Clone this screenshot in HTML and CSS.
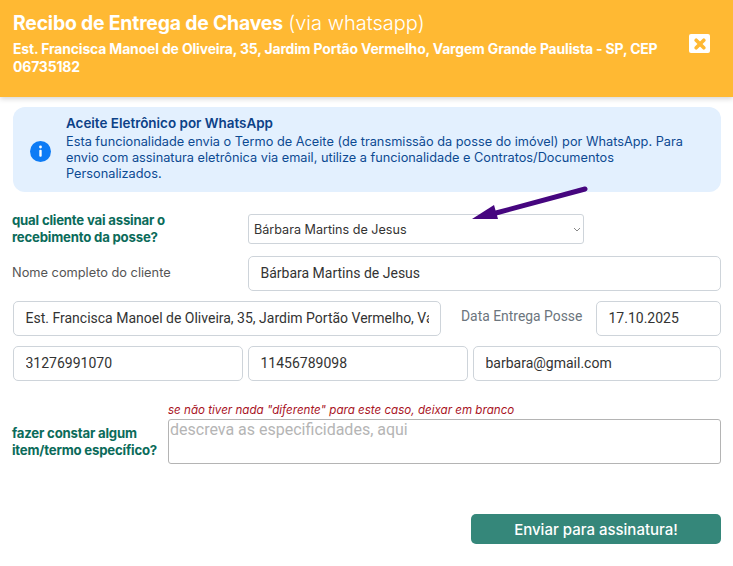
FILE: index.html
```html
<!DOCTYPE html>
<html lang="pt-BR">
<head>
<meta charset="utf-8">
<title>Recibo de Entrega de Chaves</title>
<link rel="stylesheet" href="styles.css">
</head>
<body>
<header class="head">
  <div class="head-text">
    <h1 class="title"><b>Recibo de Entrega de Chaves</b> <span class="title-light">(via whatsapp)</span></h1>
    <p class="address">Est. Francisca Manoel de Oliveira, 35, Jardim Portão Vermelho, Vargem Grande Paulista - SP, CEP 06735182</p>
  </div>
  <button class="close" aria-label="Fechar">
    <svg width="12" height="12" viewBox="0 0 12 12"><path d="M2.2 2.2 9.8 9.8M9.8 2.2 2.2 9.8" stroke="#ffb933" stroke-width="3.6" stroke-linecap="round"/></svg>
  </button>
</header>
<main class="content">
  <section class="alert">
    <svg class="alert-icon" width="21" height="21" viewBox="0 0 21 21"><circle cx="10.5" cy="10.5" r="10.5" fill="#0d7bf5"/><circle cx="10.5" cy="6" r="1.4" fill="#fff"/><rect x="9.3" y="8.8" width="2.4" height="7" rx="1" fill="#fff"/></svg>
    <div class="alert-text">
      <div class="alert-title">Aceite Eletrônico por WhatsApp</div>
      <div class="alert-body">Esta funcionalidade envia o Termo de Aceite (de transmissão da posse do imóvel) por WhatsApp. Para envio com assinatura eletrônica via email, utilize a funcionalidade e Contratos/Documentos Personalizados.</div>
    </div>
  </section>

  <div class="row row-select">
    <label class="label-strong label-col">qual cliente vai assinar o recebimento da posse?</label>
    <div class="select-wrap">
      <select class="select"><option>Bárbara Martins de Jesus</option></select>
      <svg class="chevron" width="8" height="5" viewBox="0 0 8 5"><path d="M1 1 4 4 7 1" stroke="#888" stroke-width="1" fill="none"/></svg>
      <svg class="arrow" width="118" height="36" viewBox="0 0 118 36"><path d="M113 3 24 27" stroke="#46067f" stroke-width="5" stroke-linecap="round" fill="none"/><path d="M0 33 22 19 26 33Z" fill="#46067f"/></svg>
    </div>
  </div>

  <div class="row row-name">
    <label class="label-plain label-col">Nome completo do cliente</label>
    <input class="field grow" value="Bárbara Martins de Jesus">
  </div>

  <div class="row row-address">
    <input class="field address-field" value="Est. Francisca Manoel de Oliveira, 35, Jardim Portão Vermelho, Vargem Grande Paulista - SP">
    <label class="label-date">Data Entrega Posse</label>
    <input class="field date-field" value="17.10.2025">
  </div>

  <div class="row row-contact">
    <input class="field cpf" value="31276991070">
    <input class="field phone" value="11456789098">
    <input class="field grow" value="barbara@gmail.com">
  </div>

  <p class="hint">se não tiver nada "diferente" para este caso, deixar em branco</p>
  <div class="row row-notes">
    <label class="label-strong notes-label">fazer constar algum item/termo específico?</label>
    <textarea class="notes" placeholder="descreva as especificidades, aqui"></textarea>
  </div>

  <div class="actions">
    <button class="submit">Enviar para assinatura!</button>
  </div>
</main>
</body>
</html>
```

FILE: styles.css
```css
* { box-sizing: border-box; }
html, body { margin: 0; padding: 0; }
body {
  width: 733px;
  height: 566px;
  overflow: hidden;
  background: #fff;
  font-family: "Inter", "Noto Sans", sans-serif;
}
.head {
  height: 97px;
  background: #ffb933;
  box-shadow: 0 2px 5px rgba(0,0,0,.16);
  display: flex;
  align-items: flex-start;
  padding: 10px 23px 0 13px;
  color: #fff;
}
.head-text { width: 665px; flex: none; }
.title {
  margin: 0;
  font-size: 19.4px;
  line-height: 26px;
  font-weight: 400;
}
.title b { font-weight: 700; letter-spacing: -.2px; }
.title-light { font-weight: 300; font-size: 20px; }
.address {
  margin: 4px 0 0;
  font-size: 13.95px;
  line-height: 18px;
  font-weight: 700;
  letter-spacing: -.15px;
}
.close {
  margin: 24px 0 0 11px;
  width: 21px;
  height: 19px;
  padding: 0;
  border: 0;
  border-radius: 2px;
  background: #fff;
  display: flex;
  align-items: center;
  justify-content: center;
}
.content { padding: 10px 12px 0 13px; }
.alert {
  height: 85px;
  background: #e3f0fe;
  border-radius: 12px;
  display: flex;
  align-items: center;
  padding: 0 12px 0 17px;
  color: #0d4a92;
}
.alert-icon { flex: none; margin: 3px 15px 0 0; }
.alert-text { width: 625px; padding-bottom: 3px; }
.alert-title { font-size: 13.45px; line-height: 17px; font-weight: 600; color: #0c4187; margin-bottom: 2px; }
.alert-body { font-size: 12.75px; line-height: 16px; }
.row { display: flex; align-items: center; }
.row-select { margin-top: 20px; height: 34px; }
.label-col { width: 235px; flex: none; margin-left: -1px; margin-right: 1px; }
.label-strong {
  font-size: 13.2px;
  line-height: 17px;
  font-weight: 700;
  color: #0b6b5a;
  letter-spacing: -.2px;
}
.row-select .label-strong { padding-right: 50px; }
.label-plain { font-size: 12.8px; color: #555; padding-bottom: 2px; }
.select-wrap { position: relative; width: 336px; }
.select {
  width: 100%;
  height: 30px;
  padding: 0 2px 0 5px;
  border: 1px solid #ced4da;
  border-radius: 3px;
  background: #fff;
  color: #333;
  font: 12.6px "Inter", sans-serif;
  appearance: none;
  display: block;
}
.chevron { position: absolute; right: 3px; top: 13px; }
.arrow { position: absolute; left: 224px; top: -28px; }
.field {
  height: 35px;
  padding: 0 11.5px 2px;
  border: 1px solid #ced4da;
  border-radius: 5px;
  background: #fff;
  color: #333;
  font: 14px "Roboto", sans-serif;
}
.grow { flex: 1; min-width: 0; }
.row-name { margin-top: 10px; }
.row-address { margin-top: 10px; }
.address-field { width: 428px; }
.label-date {
  width: 155px;
  padding: 0 0 5px 20px;
  color: #6c757d;
  font: 13.9px "Roboto", sans-serif;
}
.date-field { width: 125px; }
.row-contact { margin-top: 10px; gap: 5px; }
.cpf { width: 230px; }
.phone { width: 220px; }
.hint {
  margin: 21px 0 0 155px;
  font-size: 11.6px;
  line-height: 16px;
  font-style: italic;
  color: #a9141f;
}
.row-notes { margin-top: 1px; }
.notes-label { width: 155px; flex: none; margin-left: -1px; margin-right: 1px; }
.notes {
  flex: 1;
  height: 45px;
  padding: 0 1px;
  border: 1px solid #b4b4b4;
  border-radius: 3px;
  resize: none;
  font: 16px "Roboto", sans-serif;
}
.notes::placeholder { color: #b5b5b5; }
.actions { display: flex; justify-content: flex-end; margin-top: 50px; }
.submit {
  width: 250px;
  height: 30px;
  border: 0;
  border-radius: 5px;
  background: #35877a;
  color: #fff;
  font: 500 15px "Inter", sans-serif;
}
```
